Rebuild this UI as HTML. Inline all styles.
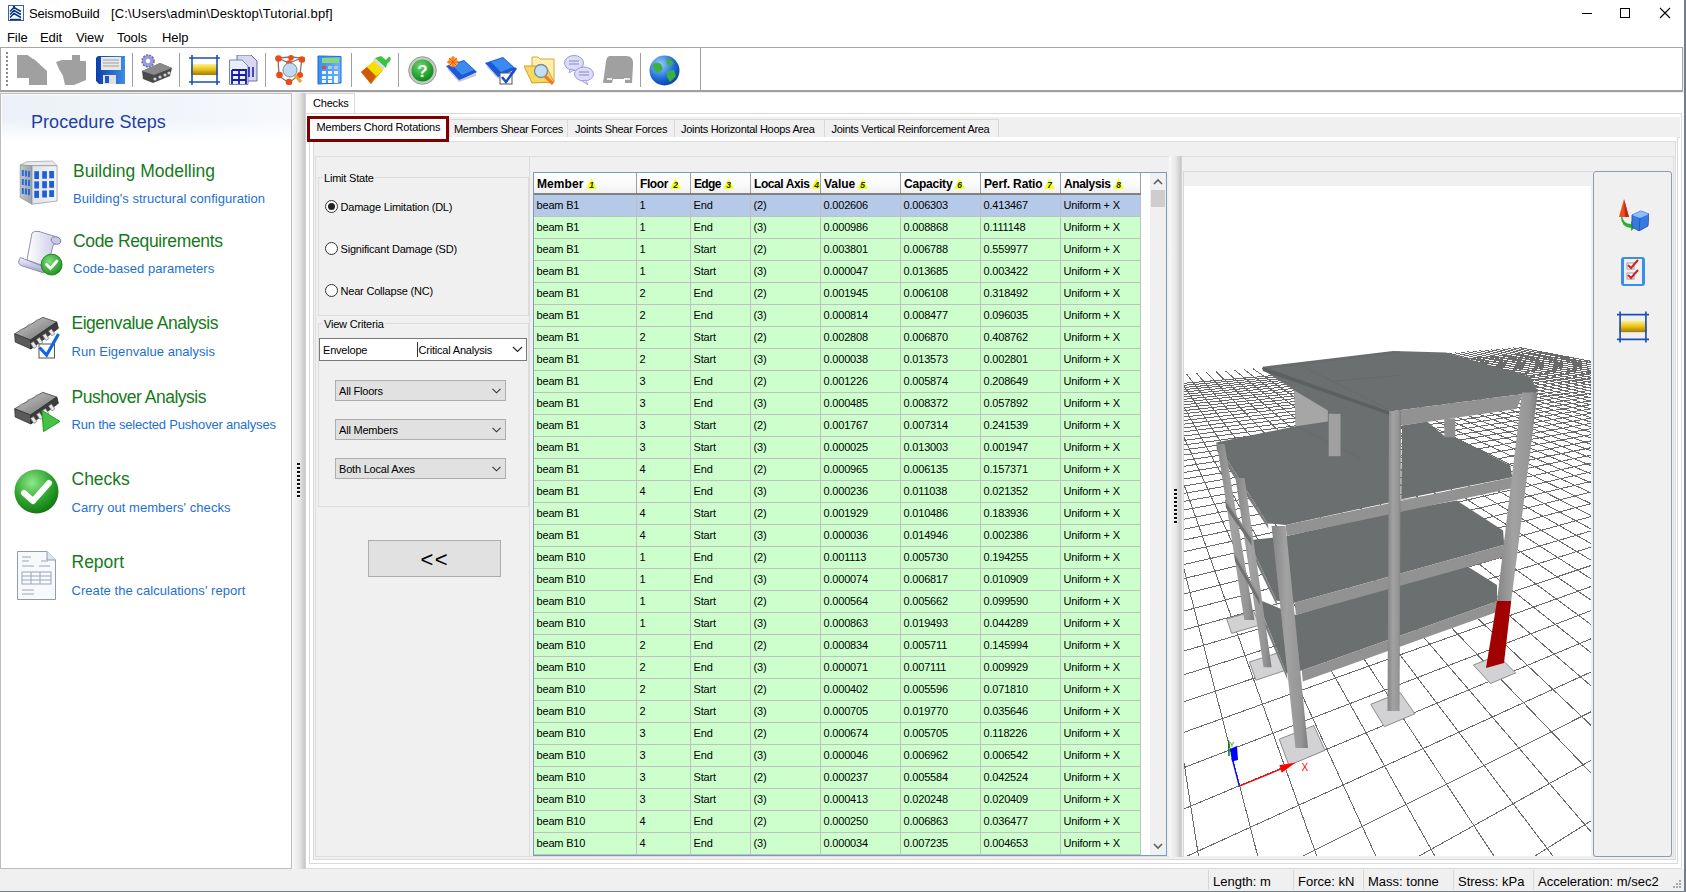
<!DOCTYPE html>
<html><head><meta charset="utf-8"><title>SeismoBuild</title>
<style>
*{box-sizing:border-box;margin:0;padding:0}
html,body{width:1686px;height:892px;overflow:hidden}
body{position:relative;background:#f0f0f0;font-family:"Liberation Sans",sans-serif;color:#000}
.a{position:absolute}
.t{position:absolute;white-space:pre;line-height:1}
/* title/menu */
#top{left:0;top:0;width:1684px;height:47px;background:#fff}
.menu{font-size:13px;top:31px;letter-spacing:-0.1px}
/* toolbar */
#tb{left:0;top:47px;width:1683px;height:45px;background:#fff;border:1px solid #a7a7a7;border-bottom:2px solid #a0a0a0}
.sep{position:absolute;top:6px;width:1px;height:34px;background:#a0a0a0}
.ico{position:absolute;top:7px;width:32px;height:32px}
/* left panel */
#lp{left:0;top:93px;width:292px;height:776px;background:#fff;border:1px solid #bcbcbc}
#lph{left:1px;top:1px;width:289px;height:46px;background:linear-gradient(180deg,rgba(255,255,255,0) 0%,rgba(255,255,255,0) 55%,#fff 100%),linear-gradient(90deg,#ecf1f9 0%,#f1f5fb 60%,#f7f9fc 100%)}
.st{font-size:17.5px;color:#167a1b;letter-spacing:0px}
.ss{font-size:13px;color:#1e6fd3;letter-spacing:0.05px}
/* splitter */
.spl{background:linear-gradient(90deg,#f9f9f9 0%,#e6e6e6 55%,#c6c6c6 92%,#dcdcdc 100%)}
/* main */
#main{left:306px;top:93px;width:1378px;height:776px;background:#fff}
.tab{position:absolute;top:119px;height:19px;background:#f0f0f0;border:1px solid #d9d9d9;border-bottom:none;font-size:11px;letter-spacing:-0.3px}
.tab span{position:absolute;left:4px;top:3px;white-space:pre}
.ctl{font-size:11px;letter-spacing:-0.2px}
.combo{position:absolute;background:#e1e1e1;border:1px solid #adadad;height:21px;font-size:11px;letter-spacing:-0.2px}
.combo span{position:absolute;left:3px;top:4px;white-space:pre}
.chev{position:absolute;right:4px;top:7px;width:9px;height:6px}
.radio{position:absolute;width:13px;height:13px;border-radius:50%;border:1px solid #333;background:#fff}
.radio.on::after{content:"";position:absolute;left:2px;top:2px;width:7px;height:7px;border-radius:50%;background:#222}
/* table */
#tbl{left:533px;top:172px;width:634px;height:684px;background:#fff;border:1px solid #7a9ac0}
.thead{position:absolute;left:0;top:0;width:607px;height:22px;background:linear-gradient(180deg,#fff 0%,#fafafa 60%,#f0f0f0 100%);border-bottom:2px solid #808080}
.th{position:absolute;top:0;height:20px;border-right:1px solid #a0a0a0;font-size:12px;font-weight:bold;padding-left:3px;white-space:nowrap;overflow:hidden}
.th span{position:absolute;left:3px;top:4px;letter-spacing:0.1px}
.tri{position:relative;display:inline-block;width:11px;height:11px;margin-left:2px;top:1px;letter-spacing:0}
.tr{position:absolute;left:0;width:607px;height:22px;background:#ccffcc;border-bottom:1px solid #c0c0c0}
.tr.sel{background:#b5c9e9}
.td{position:absolute;top:0;height:21px;border-right:1px solid #c0c0c0;font-size:11px;letter-spacing:-0.2px;padding:4px 0 0 2.6px;white-space:pre;overflow:hidden}
/* status */
.sb{font-size:13px;top:875px}
.sbsep{position:absolute;top:870px;width:1px;height:20px;background:#d6d6d6}
</style></head><body>
<!-- top -->
<div id="top" class="a"></div>
<svg class="a" style="left:8px;top:5px" width="16" height="16" viewBox="0 0 16 16">
 <rect x="0.5" y="0.5" width="15" height="15" fill="#fff" stroke="#3d6394" stroke-width="1"/>
 <path d="M2 6.5L6 2.5L13 6.5M2 9.5L6 5.5L13 9.5M2 12.5L6 8.5L13 12.5M2 14.5L13 14.5" stroke="#08397f" stroke-width="1.6" fill="none"/>
 <rect x="5" y="1" width="2" height="2" fill="#08397f"/>
</svg>
<div class="t" style="left:29px;top:7px;font-size:13px;letter-spacing:-0.15px">SeismoBuild</div>
<div class="t" style="left:111px;top:7px;font-size:13px;letter-spacing:0.15px">[C:\Users\admin\Desktop\Tutorial.bpf]</div>
<div class="a" style="left:1582px;top:13px;width:10px;height:1px;background:#000"></div>
<div class="a" style="left:1620px;top:8px;width:10px;height:10px;border:1px solid #000"></div>
<svg class="a" style="left:1659px;top:7px" width="12" height="12"><path d="M1 1L11 11M11 1L1 11" stroke="#000" stroke-width="1.1"/></svg>
<div class="t menu" style="left:7px">File</div>
<div class="t menu" style="left:40px">Edit</div>
<div class="t menu" style="left:76px">View</div>
<div class="t menu" style="left:117px">Tools</div>
<div class="t menu" style="left:162px">Help</div>
<div class="a" style="left:1684px;top:0;width:2px;height:892px;background:#6f7e8a"></div>

<!-- toolbar -->
<div id="tb" class="a"></div>
<div class="a" style="left:6px;top:52px;width:2px;height:34px;background:repeating-linear-gradient(180deg,#8a8a8a 0 2px,transparent 2px 4px)"></div>
<div class="sep" style="left:132px;top:53px"></div>
<div class="sep" style="left:179px;top:53px"></div>
<div class="sep" style="left:265px;top:53px"></div>
<div class="sep" style="left:351px;top:53px"></div>
<div class="sep" style="left:398px;top:53px"></div>
<div class="sep" style="left:640px;top:53px"></div>
<div class="a" style="left:700px;top:48px;width:1px;height:42px;background:#a0a0a0"></div>
<!-- gray new -->
<svg class="a" style="left:17px;top:55px" width="31" height="31" viewBox="0 0 31 31"><path d="M0 0H10.5L16 4H17L30 16V30H12V23H0Z" fill="#a0a0a0"/></svg>
<svg class="a" style="left:56px;top:55px" width="31" height="31" viewBox="0 0 31 31"><path d="M16 0H24V6H30V25L18 30H9L7 21L3 14L0 7L6 5H16Z" fill="#a0a0a0"/></svg>
<!-- floppy -->
<svg class="a" style="left:96px;top:56px" width="30" height="29" viewBox="0 0 30 29">
 <defs><linearGradient id="flp" x1="0" x2="1"><stop offset="0" stop-color="#0c3fa8"/><stop offset="1" stop-color="#3c8ee8"/></linearGradient></defs>
 <path d="M2 0H29V28H3L0 25V2Z" fill="url(#flp)"/>
 <rect x="5" y="1" width="20" height="13" fill="#e8e8e8"/><path d="M7 4H23M7 7H23M7 10H23" stroke="#b8b8b8" stroke-width="1.4"/>
 <rect x="7" y="19" width="13" height="9" fill="#e0e0e0"/><rect x="9" y="20" width="4" height="7" fill="#1e58c8"/>
</svg>
<!-- gear chip -->
<svg class="a" style="left:140px;top:54px" width="33" height="29" viewBox="0 0 33 29">
 <path d="M2 17 L20 9 L32 14 L30 22 L13 29 L3 25 Z" fill="#4a4a4a"/>
 <path d="M2 17 L20 9 L32 14 L14 21 Z" fill="#8a8a8a"/>
 <g fill="#d0d0d0"><circle cx="15" cy="25" r="1.6"/><circle cx="20" cy="23" r="1.6"/><circle cx="25" cy="21" r="1.6"/><circle cx="29" cy="19" r="1.6"/></g>
 <circle cx="8" cy="7" r="6" fill="#9a9adc" stroke="#6a6ab8" stroke-width="1.5" stroke-dasharray="2 1.2"/>
 <circle cx="8" cy="7" r="2.2" fill="#fff"/>
</svg>
<!-- frame -->
<svg class="a" style="left:189px;top:55px" width="31" height="30" viewBox="0 0 31 30">
 <defs><linearGradient id="gold" x1="0" y1="0" x2="0" y2="1"><stop offset="0" stop-color="#fff28a"/><stop offset="0.5" stop-color="#e8c21a"/><stop offset="1" stop-color="#a47a00"/></linearGradient></defs>
 <rect x="2" y="9" width="27" height="11" fill="url(#gold)"/>
 <path d="M0 3H31M0 27H31M3 0V30M28 0V30" stroke="#1a4fb8" stroke-width="1.6"/>
</svg>
<!-- docs -->
<svg class="a" style="left:229px;top:55px" width="29" height="30" viewBox="0 0 29 30">
 <path d="M8 0H22L28 6V26H8Z" fill="#d7d7ef" stroke="#6a6ab0" stroke-width="1"/>
 <path d="M0.5 5H13L19 11V29.5H0.5Z" fill="#e8eef8" stroke="#6a8ab0" stroke-width="1"/>
 <path d="M3 15H17V29M3 15V29M3 20H17M3 25H17M10 15V29" stroke="#1a1aa8" stroke-width="1.8" fill="none"/>
 <path d="M20 12V22M24 12V22" stroke="#1a1aa8" stroke-width="1.5"/>
</svg>
<!-- molecule -->
<svg class="a" style="left:275px;top:55px" width="30" height="30" viewBox="0 0 30 30">
 <path d="M3 3L16 2L27 3L25 19L14 28L4 21Z M16 2L14 8M3 3L14 8L27 3" stroke="#777" stroke-width="1.3" fill="none"/>
 <g fill="#ee4a16"><circle cx="3.5" cy="3.5" r="3.3"/><circle cx="16" cy="2.8" r="2.8"/><circle cx="27" cy="4.5" r="3.3"/><circle cx="14" cy="8" r="2.8"/><circle cx="4.5" cy="20" r="3.3"/><circle cx="25" cy="20" r="3"/><circle cx="14" cy="27" r="3.3"/></g>
 <circle cx="15" cy="15" r="7" fill="#bcdcf4" stroke="#888" stroke-width="1"/>
 <path d="M20 20L26 27" stroke="#f0a030" stroke-width="3"/>
</svg>
<!-- calculator -->
<svg class="a" style="left:317px;top:55px" width="25" height="30" viewBox="0 0 25 30">
 <defs><linearGradient id="calc" x1="0" x2="1"><stop offset="0" stop-color="#3a8ef0"/><stop offset="1" stop-color="#6ab4ff"/></linearGradient></defs>
 <path d="M1 1L24 1.5V28L1 29Z" fill="url(#calc)" stroke="#1a6ad8" stroke-width="1"/>
 <rect x="5" y="3" width="17" height="5" fill="#8ad87a"/>
 <rect x="5" y="11" width="4" height="3" fill="#e04a30"/><rect x="11" y="11" width="4" height="3" fill="#c8c0c8"/><rect x="17" y="11" width="4" height="3" fill="#c8c0c8"/>
 <g fill="#f2f6fb"><rect x="5" y="16" width="4" height="3"/><rect x="11" y="16" width="4" height="3"/><rect x="17" y="16" width="4" height="3"/><rect x="5" y="21" width="4" height="3"/><rect x="11" y="21" width="4" height="3"/><rect x="17" y="21" width="4" height="7"/><rect x="5" y="25" width="4" height="3"/><rect x="11" y="25" width="4" height="3"/></g>
</svg>
<!-- brush -->
<svg class="a" style="left:361px;top:55px" width="31" height="30" viewBox="0 0 31 30">
 <path d="M0 17L13 6L22 15L10 29Z" fill="#e8a400"/>
 <path d="M0 17L6 12L15 21L10 29Z" fill="#d0580a"/>
 <path d="M6 12L13 6L22 15L15 21Z" fill="#f5e000"/>
 <path d="M12 5L14 3L24 13L22 15Z" fill="#d8d8d8"/>
 <path d="M14 3L20 1L25 5L28 1.5Q31 3 29 6L26 9L25 13Z" fill="#3ec23e"/>
</svg>
<!-- help -->
<svg class="a" style="left:408px;top:56px" width="29" height="29" viewBox="0 0 29 29">
 <defs><radialGradient id="hlp" cx="0.4" cy="0.3" r="0.7"><stop offset="0" stop-color="#6ad86a"/><stop offset="1" stop-color="#0a8a1a"/></radialGradient></defs>
 <circle cx="14.5" cy="14.5" r="13.8" fill="#c8c8c8" stroke="#999" stroke-width="1"/>
 <circle cx="14.5" cy="14.5" r="11" fill="url(#hlp)"/>
 <text x="14.5" y="21" font-size="17" font-weight="bold" fill="#fff" text-anchor="middle" font-family="Liberation Sans">?</text>
</svg>
<!-- book1 -->
<svg class="a" style="left:446px;top:56px" width="32" height="27" viewBox="0 0 32 27">
 <path d="M0 10L18 4L31 16L13 25Z" fill="#1a5ad8"/>
 <path d="M2 12L13 24L30 17L30 20L13 26L2 14Z" fill="#c8c8d8"/>
 <path d="M6 9L18 5L28 14L16 19Z" fill="#3a8af0"/>
 <circle cx="7" cy="6" r="5" fill="#ffb020"/><circle cx="7" cy="6" r="2.5" fill="#ffe050"/>
 <path d="M1 6H13M7 0V12M3 2L11 10M11 2L3 10" stroke="#ff4020" stroke-width="1"/>
</svg>
<!-- book2 -->
<svg class="a" style="left:485px;top:57px" width="32" height="28" viewBox="0 0 32 28">
 <path d="M0 6L18 0L31 12L13 21Z" fill="#1a5ad8"/>
 <path d="M2 8L13 20L30 13L30 16L13 22L2 10Z" fill="#c8c8d8"/>
 <path d="M6 5L18 1L28 10L16 15Z" fill="#3a8af0"/>
 <rect x="15" y="16" width="12" height="11" fill="#fff" stroke="#555" stroke-width="1"/>
 <path d="M17 20L21 25L31 11" stroke="#1a4ad0" stroke-width="2.5" fill="none"/>
</svg>
<!-- folder -->
<svg class="a" style="left:524px;top:56px" width="31" height="29" viewBox="0 0 31 29">
 <path d="M8 1H14L16 3H30V26H8Z" fill="#fff0b0" stroke="#d8a830" stroke-width="1"/>
 <path d="M0 10L22 10L30 26L8 27Z" fill="#f8d860" stroke="#d0a020" stroke-width="1"/>
 <circle cx="17" cy="15" r="6.5" fill="#bfe0f8" stroke="#7a8a9a" stroke-width="1.3"/>
 <path d="M21 20L29 28" stroke="#f07a30" stroke-width="3.2"/>
</svg>
<!-- chat -->
<svg class="a" style="left:564px;top:55px" width="31" height="30" viewBox="0 0 31 30">
 <ellipse cx="10" cy="8" rx="9.5" ry="7.5" fill="#dcdcf8" stroke="#9a9ad8" stroke-width="1"/>
 <path d="M6 14L5 18L10 15Z" fill="#dcdcf8" stroke="#9a9ad8" stroke-width="0.8"/>
 <ellipse cx="20" cy="19" rx="9.5" ry="7" fill="#dcdcf8" stroke="#9a9ad8" stroke-width="1"/>
 <path d="M22 25L24 30L18 26Z" fill="#dcdcf8" stroke="#9a9ad8" stroke-width="0.8"/>
 <path d="M5 6H15M5 9H15M15 17H25M15 20H25" stroke="#8a8ab8" stroke-width="1"/>
</svg>
<!-- gray -->
<svg class="a" style="left:603px;top:55px" width="31" height="30" viewBox="0 0 31 30"><path d="M7 1H23Q31 1 30 10L29 28H22V24H10L9 28H0L2 14L3 6Q4 1 7 1Z" fill="#a0a0a0"/><path d="M4 24H9M21 24H27" stroke="#fff" stroke-width="1.5"/></svg>
<!-- globe -->
<svg class="a" style="left:649px;top:55px" width="31" height="31" viewBox="0 0 31 31">
 <defs><radialGradient id="glb" cx="0.35" cy="0.3" r="0.8"><stop offset="0" stop-color="#9ad0ff"/><stop offset="0.6" stop-color="#1a6ad8"/><stop offset="1" stop-color="#0a3a98"/></radialGradient></defs>
 <circle cx="15.5" cy="15.5" r="15" fill="url(#glb)"/>
 <path d="M3 10Q8 6 12 9L14 14L9 18L6 16Z M17 4Q22 4 25 8L22 11L18 9Z M18 16L25 15L27 21L21 27L18 22Z" fill="#3ab040"/>
</svg>


<!-- left panel -->
<div id="lp" class="a"><div id="lph" class="a"></div></div>
<div class="t" style="left:31px;top:113px;font-size:18px;color:#1f3ea5;letter-spacing:0.05px">Procedure Steps</div>
<!-- Building Modelling -->
<svg class="a" style="left:18px;top:158px" width="44" height="48" viewBox="0 0 44 48">
 <defs>
  <linearGradient id="bgf" x1="0" x2="1"><stop offset="0" stop-color="#dfe2e6"/><stop offset="1" stop-color="#f2f3f5"/></linearGradient>
  <linearGradient id="bgs" x1="0" x2="1"><stop offset="0" stop-color="#c2c6cc"/><stop offset="1" stop-color="#9aa0a8"/></linearGradient>
 </defs>
 <path d="M2.2 7 L8.5 3.8 L34.4 3 L39.1 7.7 L14 7.7 Z" fill="#e8eaec" stroke="#9a9fa6" stroke-width="0.7"/>
 <path d="M2.2 7 L14 7.7 L14 46.2 L2.2 39.5 Z" fill="url(#bgs)" stroke="#8b929b" stroke-width="0.7"/>
 <path d="M14 7.7 L39.1 7.7 L39.1 43 L14 46.2 Z" fill="url(#bgf)" stroke="#8b929b" stroke-width="0.7"/>
 <g fill="#1f5fd6">
  <rect x="16.3" y="13.2" width="4.7" height="7.8"/><rect x="24.2" y="13.2" width="4.7" height="7.5"/><rect x="31.2" y="13" width="4.8" height="7.3"/>
  <rect x="16.3" y="23.4" width="4.7" height="7.1"/><rect x="24.2" y="23.2" width="4.7" height="7"/><rect x="31.2" y="23" width="4.8" height="6.8"/>
  <rect x="16.3" y="32.8" width="4.7" height="7.1"/><rect x="24.2" y="32.5" width="4.7" height="7"/><rect x="31.2" y="32.2" width="4.8" height="6.8"/>
 </g>
 <g fill="#2a6ad8">
  <rect x="3.8" y="12" width="2" height="6"/><rect x="6.9" y="12.5" width="2.1" height="6"/><rect x="10" y="13" width="2" height="6"/>
  <rect x="3.8" y="21" width="2" height="6"/><rect x="6.9" y="21.5" width="2.1" height="6"/><rect x="10" y="22" width="2" height="6"/>
  <rect x="3.8" y="30" width="2" height="6"/><rect x="6.9" y="30.5" width="2.1" height="6"/><rect x="10" y="31" width="2" height="6"/>
 </g>
</svg>
<div class="t st" style="left:73px;top:162.5px">Building Modelling</div>
<div class="t ss" style="left:73px;top:192px">Building's structural configuration</div>

<!-- Code Requirements -->
<svg class="a" style="left:16px;top:229px" width="48" height="48" viewBox="0 0 48 48">
 <defs><linearGradient id="scr" x1="0" x2="1"><stop offset="0" stop-color="#ffffff"/><stop offset="1" stop-color="#c4c4e4"/></linearGradient>
 <linearGradient id="roll" x1="0" y1="0" x2="0" y2="1"><stop offset="0" stop-color="#f4f4fc"/><stop offset="1" stop-color="#9c9cc8"/></linearGradient>
 <radialGradient id="gck" cx="0.4" cy="0.35" r="0.7"><stop offset="0" stop-color="#7fe07a"/><stop offset="1" stop-color="#1a8f1a"/></radialGradient></defs>
 <path d="M16 4 Q18 1.5 23 2.5 L41 8 Q46 10 44 14 L37.5 15.5 L31 38 L11 31 Z" fill="url(#scr)" stroke="#8585ad" stroke-width="0.9"/>
 <ellipse cx="40" cy="11.5" rx="5" ry="3.6" transform="rotate(20 40 11.5)" fill="#c8c8e6" stroke="#8585ad" stroke-width="0.9"/>
 <path d="M4.5 28.5 L27 37.5 Q30.5 40 28 44 L5 36.5 Q0.5 34 4.5 28.5Z" fill="url(#roll)" stroke="#8585ad" stroke-width="0.9"/>
 <circle cx="35.6" cy="35.6" r="10.5" fill="url(#gck)" stroke="#157015" stroke-width="0.8"/>
 <path d="M30.5 35.5 L34.5 39.5 L41 32" stroke="#fff" stroke-width="2.8" fill="none" stroke-linecap="round"/>
</svg>
<div class="t st" style="left:73px;top:232.5px;letter-spacing:-0.36px">Code Requirements</div>
<div class="t ss" style="left:73px;top:262px">Code-based parameters</div>

<!-- Eigenvalue -->
<svg class="a" style="left:12px;top:312px" width="50" height="48" viewBox="0 0 50 48">
 <defs><linearGradient id="chipt" x1="0" y1="0" x2="1" y2="1"><stop offset="0" stop-color="#d0d0d0"/><stop offset="1" stop-color="#6a6a6a"/></linearGradient></defs>
 <path d="M2.7 21.8L30.7 5.3L44.8 10L18.5 28Z" fill="url(#chipt)" stroke="#444" stroke-width="0.8"/>
 <path d="M2.7 21.8L18.5 28L18.9 37L3.2 30Z" fill="#5a5a5a" stroke="#333" stroke-width="0.8"/>
 <path d="M18.5 28L44.8 10L46.4 16.3L18.9 37Z" fill="#3c3c3c" stroke="#2a2a2a" stroke-width="0.8"/>
 <g fill="#e8e8e8" stroke="#777" stroke-width="0.6"><rect x="20" y="30" width="3.5" height="6" transform="rotate(-35 21.7 33)"/><rect x="26" y="26" width="3.5" height="6" transform="rotate(-35 27.7 29)"/><rect x="32" y="22" width="3.5" height="6" transform="rotate(-35 33.7 25)"/><rect x="38" y="17.5" width="3.5" height="6" transform="rotate(-35 39.7 20.5)"/></g>
 <g fill="#9a9a9a"><rect x="7" y="17" width="4" height="2" transform="rotate(-30 9 18)"/><rect x="15" y="12" width="4" height="2" transform="rotate(-30 17 13)"/><rect x="23" y="7.5" width="4" height="2" transform="rotate(-30 25 8.5)"/></g>
 <rect x="27" y="32" width="15.5" height="14" fill="#fff" stroke="#555" stroke-width="1"/>
 <path d="M27.5 35.5L34.6 43L46.5 22" stroke="#1565e0" stroke-width="3.2" fill="none"/>
</svg>
<div class="t st" style="left:71.5px;top:315px;letter-spacing:-0.48px">Eigenvalue Analysis</div>
<div class="t ss" style="left:71.5px;top:344.5px">Run Eigenvalue analysis</div>

<!-- Pushover -->
<svg class="a" style="left:12px;top:386.5px" width="50" height="48" viewBox="0 0 50 48">
 <path d="M2.7 21.8L30.7 5.3L44.8 10L18.5 28Z" fill="url(#chipt)" stroke="#444" stroke-width="0.8"/>
 <path d="M2.7 21.8L18.5 28L18.9 37L3.2 30Z" fill="#5a5a5a" stroke="#333" stroke-width="0.8"/>
 <path d="M18.5 28L44.8 10L46.4 16.3L18.9 37Z" fill="#3c3c3c" stroke="#2a2a2a" stroke-width="0.8"/>
 <g fill="#e8e8e8" stroke="#777" stroke-width="0.6"><rect x="20" y="30" width="3.5" height="6" transform="rotate(-35 21.7 33)"/><rect x="26" y="26" width="3.5" height="6" transform="rotate(-35 27.7 29)"/><rect x="32" y="22" width="3.5" height="6" transform="rotate(-35 33.7 25)"/><rect x="38" y="17.5" width="3.5" height="6" transform="rotate(-35 39.7 20.5)"/></g>
 <g fill="#9a9a9a"><rect x="7" y="17" width="4" height="2" transform="rotate(-30 9 18)"/><rect x="15" y="12" width="4" height="2" transform="rotate(-30 17 13)"/><rect x="23" y="7.5" width="4" height="2" transform="rotate(-30 25 8.5)"/></g>
 <path d="M29.9 23.4L31.5 44.6L48 34.4Z" fill="#46c046" stroke="#239a23" stroke-width="1"/>
</svg>
<div class="t st" style="left:71.5px;top:388.5px;letter-spacing:-0.5px">Pushover Analysis</div>
<div class="t ss" style="left:71.5px;top:418px;letter-spacing:-0.2px">Run the selected Pushover analyses</div>

<!-- Checks -->
<svg class="a" style="left:14px;top:469px" width="46" height="46" viewBox="0 0 46 46">
 <defs><radialGradient id="gck2" cx="0.4" cy="0.3" r="0.75"><stop offset="0" stop-color="#8fe88a"/><stop offset="0.6" stop-color="#2aa22a"/><stop offset="1" stop-color="#117011"/></radialGradient></defs>
 <circle cx="22.5" cy="22.5" r="22" fill="url(#gck2)"/>
 <path d="M10 24 L19 32 L35 14" stroke="#fff" stroke-width="6" fill="none" stroke-linecap="round" stroke-linejoin="round"/>
</svg>
<div class="t st" style="left:71.5px;top:471px">Checks</div>
<div class="t ss" style="left:71.5px;top:501px">Carry out members' checks</div>

<!-- Report -->
<svg class="a" style="left:17px;top:551px" width="40" height="49" viewBox="0 0 40 49">
 <path d="M0.5 0.5 L30 0.5 L38.5 9 L38.5 48.5 L0.5 48.5 Z" fill="#f7f9fc" stroke="#8e9bb0" stroke-width="1"/>
 <path d="M30 0.5 L30 9 L38.5 9" fill="#dfe6ef" stroke="#8e9bb0" stroke-width="1"/>
 <g stroke="#9aa6b8" stroke-width="1">
  <path d="M5 6H14M5 10H12M24 10H31M5 15H17M22 15H33"/>
  <rect x="5" y="21" width="29" height="12" fill="none"/>
  <path d="M5 25H34M5 29H34M14 21V33M23 21V33M5 39H17M5 43H17"/>
 </g>
</svg>
<div class="t st" style="left:71.5px;top:553.5px">Report</div>
<div class="t ss" style="left:71.5px;top:583.5px">Create the calculations' report</div>



<!-- splitters -->
<div class="a spl" style="left:292px;top:93px;width:14px;height:776px"></div>
<!-- splitter grip -->
<div class="a" style="left:297px;top:463px;width:3px;height:36px;background:repeating-linear-gradient(180deg,#111 0 2px,#fff 2px 3px,transparent 3px 4px)"></div>

<!-- main -->
<div id="main" class="a"></div>
<!-- checks tab header -->
<div class="a" style="left:306px;top:93px;width:49px;height:21px;background:#fff;border-right:1px solid #d9d9d9;border-top:1px solid #d9d9d9"></div>
<div class="t" style="left:313px;top:97.5px;font-size:11px;letter-spacing:-0.2px">Checks</div>
<!-- F1 -->
<div class="a" style="left:306px;top:113px;width:1376px;height:756px;background:#fff;border-top:1px solid #d9d9d9;border-right:1px solid #d9d9d9;border-bottom:1px solid #d9d9d9"></div>
<div class="a" style="left:354px;top:93px;width:1px;height:21px;background:#d9d9d9"></div>
<!-- tab strip -->
<div class="a" style="left:307px;top:117px;width:1373px;height:21px;background:#f0f0f0;border-bottom:1px solid #dadada"></div>
<div class="tab" style="left:449px;width:119px"><span style="left:4px">Members Shear Forces</span></div>
<div class="tab" style="left:567px;width:108px"><span style="left:7px">Joints Shear Forces</span></div>
<div class="tab" style="left:674px;width:151px"><span style="left:6px">Joints Horizontal Hoops Area</span></div>
<div class="tab" style="left:824px;width:175px"><span style="left:6.5px">Joints Vertical Reinforcement Area</span></div>
<!-- F3/F4/F5 -->
<div class="a" style="left:309px;top:137px;width:1369px;height:727px;background:#fff;border:1px solid #dadada;border-top:none"></div>
<div class="a" style="left:313px;top:141px;width:1363px;height:719px;background:#f0f0f0;border:1px solid #dadada"></div>
<div class="a" style="left:315px;top:156px;width:1359px;height:701px;background:#f0f0f0;border:1px solid #dedede"></div>
<!-- selected tab -->
<div class="a" style="left:307px;top:116px;width:142px;height:26px;background:#fff;border:3px solid #800000"></div>
<div class="t" style="left:316.5px;top:122px;font-size:11px;letter-spacing:-0.2px">Members Chord Rotations</div>
<!-- control panel -->
<div class="a" style="left:529px;top:156px;width:1px;height:701px;background:#dcdcdc"></div>
<div class="a" style="left:318px;top:177px;width:211px;height:139px;border:1px solid #dcdcdc"></div>
<div class="t ctl" style="left:323px;top:172.5px;background:#f0f0f0;padding:0 1px">Limit State</div>
<div class="radio on" style="left:325px;top:200px"></div>
<div class="t ctl" style="left:340.5px;top:201.5px">Damage Limitation (DL)</div>
<div class="radio" style="left:325px;top:242px"></div>
<div class="t ctl" style="left:340.5px;top:243.5px">Significant Damage (SD)</div>
<div class="radio" style="left:325px;top:284px"></div>
<div class="t ctl" style="left:340.5px;top:285.5px">Near Collapse (NC)</div>

<div class="a" style="left:318px;top:323px;width:211px;height:184px;border:1px solid #dcdcdc"></div>
<div class="t ctl" style="left:323px;top:318.5px;background:#f0f0f0;padding:0 1px">View Criteria</div>
<div class="a" style="left:319px;top:338px;width:208px;height:23px;background:#fff;border:1px solid #7a7a7a"></div>
<div class="a" style="left:417px;top:342px;width:1px;height:15px;background:#333"></div>
<div class="t ctl" style="left:323px;top:344.5px">Envelope</div>
<div class="t ctl" style="left:418.5px;top:344.5px">Critical Analysis</div>
<svg class="a" style="left:512px;top:346px" width="11" height="7"><path d="M1 1L5.5 5.5L10 1" stroke="#222" stroke-width="1.1" fill="none"/></svg>

<div class="combo" style="left:335px;top:380px;width:171px"><span>All Floors</span><svg class="chev" viewBox="0 0 9 6"><path d="M0.5 0.8L4.5 4.8L8.5 0.8" stroke="#333" stroke-width="1.1" fill="none"/></svg></div>
<div class="combo" style="left:335px;top:419px;width:171px"><span>All Members</span><svg class="chev" viewBox="0 0 9 6"><path d="M0.5 0.8L4.5 4.8L8.5 0.8" stroke="#333" stroke-width="1.1" fill="none"/></svg></div>
<div class="combo" style="left:335px;top:458px;width:171px"><span>Both Local Axes</span><svg class="chev" viewBox="0 0 9 6"><path d="M0.5 0.8L4.5 4.8L8.5 0.8" stroke="#333" stroke-width="1.1" fill="none"/></svg></div>

<div class="a" style="left:368px;top:540px;width:133px;height:37px;background:#e1e1e1;border:1px solid #adadad"></div>
<div class="t" style="left:420.5px;top:549px;font-size:22px;letter-spacing:1.4px">&lt;&lt;</div>

<!-- table -->
<div id="tbl" class="a">
<div class="thead">
<div class="th" style="left:0px;width:103px"><span style="letter-spacing:0.08px">Member<i class="tri"><svg width="11" height="11" viewBox="0 0 11 11"><path d="M5.5 0.5L10.8 10.8H0.2Z" fill="#ffff00"/><text x="5.5" y="10" font-size="8.5" font-weight="bold" text-anchor="middle" fill="#0c3a0c" font-family="Liberation Sans">1</text></svg></i></span></div>
<div class="th" style="left:103px;width:54px"><span style="letter-spacing:-0.4px">Floor<i class="tri"><svg width="11" height="11" viewBox="0 0 11 11"><path d="M5.5 0.5L10.8 10.8H0.2Z" fill="#ffff00"/><text x="5.5" y="10" font-size="8.5" font-weight="bold" text-anchor="middle" fill="#0c3a0c" font-family="Liberation Sans">2</text></svg></i></span></div>
<div class="th" style="left:157px;width:60px"><span style="letter-spacing:-0.65px">Edge<i class="tri"><svg width="11" height="11" viewBox="0 0 11 11"><path d="M5.5 0.5L10.8 10.8H0.2Z" fill="#ffff00"/><text x="5.5" y="10" font-size="8.5" font-weight="bold" text-anchor="middle" fill="#0c3a0c" font-family="Liberation Sans">3</text></svg></i></span></div>
<div class="th" style="left:217px;width:70px"><span style="letter-spacing:-0.41px">Local Axis<i class="tri"><svg width="11" height="11" viewBox="0 0 11 11"><path d="M5.5 0.5L10.8 10.8H0.2Z" fill="#ffff00"/><text x="5.5" y="10" font-size="8.5" font-weight="bold" text-anchor="middle" fill="#0c3a0c" font-family="Liberation Sans">4</text></svg></i></span></div>
<div class="th" style="left:287px;width:80px"><span style="letter-spacing:-0.06px">Value<i class="tri"><svg width="11" height="11" viewBox="0 0 11 11"><path d="M5.5 0.5L10.8 10.8H0.2Z" fill="#ffff00"/><text x="5.5" y="10" font-size="8.5" font-weight="bold" text-anchor="middle" fill="#0c3a0c" font-family="Liberation Sans">5</text></svg></i></span></div>
<div class="th" style="left:367px;width:80px"><span style="letter-spacing:-0.21px">Capacity<i class="tri"><svg width="11" height="11" viewBox="0 0 11 11"><path d="M5.5 0.5L10.8 10.8H0.2Z" fill="#ffff00"/><text x="5.5" y="10" font-size="8.5" font-weight="bold" text-anchor="middle" fill="#0c3a0c" font-family="Liberation Sans">6</text></svg></i></span></div>
<div class="th" style="left:447px;width:80px"><span style="letter-spacing:-0.15px">Perf. Ratio<i class="tri"><svg width="11" height="11" viewBox="0 0 11 11"><path d="M5.5 0.5L10.8 10.8H0.2Z" fill="#ffff00"/><text x="5.5" y="10" font-size="8.5" font-weight="bold" text-anchor="middle" fill="#0c3a0c" font-family="Liberation Sans">7</text></svg></i></span></div>
<div class="th" style="left:527px;width:80px"><span style="letter-spacing:-0.35px">Analysis<i class="tri"><svg width="11" height="11" viewBox="0 0 11 11"><path d="M5.5 0.5L10.8 10.8H0.2Z" fill="#ffff00"/><text x="5.5" y="10" font-size="8.5" font-weight="bold" text-anchor="middle" fill="#0c3a0c" font-family="Liberation Sans">8</text></svg></i></span></div>
</div>
<div class="tr sel" style="top:22px">
<div class="td" style="left:0px;width:103px">beam B1</div>
<div class="td" style="left:103px;width:54px">1</div>
<div class="td" style="left:157px;width:60px">End</div>
<div class="td" style="left:217px;width:70px">(2)</div>
<div class="td" style="left:287px;width:80px">0.002606</div>
<div class="td" style="left:367px;width:80px">0.006303</div>
<div class="td" style="left:447px;width:80px">0.413467</div>
<div class="td" style="left:527px;width:80px">Uniform + X</div>
</div>
<div class="tr" style="top:44px">
<div class="td" style="left:0px;width:103px">beam B1</div>
<div class="td" style="left:103px;width:54px">1</div>
<div class="td" style="left:157px;width:60px">End</div>
<div class="td" style="left:217px;width:70px">(3)</div>
<div class="td" style="left:287px;width:80px">0.000986</div>
<div class="td" style="left:367px;width:80px">0.008868</div>
<div class="td" style="left:447px;width:80px">0.111148</div>
<div class="td" style="left:527px;width:80px">Uniform + X</div>
</div>
<div class="tr" style="top:66px">
<div class="td" style="left:0px;width:103px">beam B1</div>
<div class="td" style="left:103px;width:54px">1</div>
<div class="td" style="left:157px;width:60px">Start</div>
<div class="td" style="left:217px;width:70px">(2)</div>
<div class="td" style="left:287px;width:80px">0.003801</div>
<div class="td" style="left:367px;width:80px">0.006788</div>
<div class="td" style="left:447px;width:80px">0.559977</div>
<div class="td" style="left:527px;width:80px">Uniform + X</div>
</div>
<div class="tr" style="top:88px">
<div class="td" style="left:0px;width:103px">beam B1</div>
<div class="td" style="left:103px;width:54px">1</div>
<div class="td" style="left:157px;width:60px">Start</div>
<div class="td" style="left:217px;width:70px">(3)</div>
<div class="td" style="left:287px;width:80px">0.000047</div>
<div class="td" style="left:367px;width:80px">0.013685</div>
<div class="td" style="left:447px;width:80px">0.003422</div>
<div class="td" style="left:527px;width:80px">Uniform + X</div>
</div>
<div class="tr" style="top:110px">
<div class="td" style="left:0px;width:103px">beam B1</div>
<div class="td" style="left:103px;width:54px">2</div>
<div class="td" style="left:157px;width:60px">End</div>
<div class="td" style="left:217px;width:70px">(2)</div>
<div class="td" style="left:287px;width:80px">0.001945</div>
<div class="td" style="left:367px;width:80px">0.006108</div>
<div class="td" style="left:447px;width:80px">0.318492</div>
<div class="td" style="left:527px;width:80px">Uniform + X</div>
</div>
<div class="tr" style="top:132px">
<div class="td" style="left:0px;width:103px">beam B1</div>
<div class="td" style="left:103px;width:54px">2</div>
<div class="td" style="left:157px;width:60px">End</div>
<div class="td" style="left:217px;width:70px">(3)</div>
<div class="td" style="left:287px;width:80px">0.000814</div>
<div class="td" style="left:367px;width:80px">0.008477</div>
<div class="td" style="left:447px;width:80px">0.096035</div>
<div class="td" style="left:527px;width:80px">Uniform + X</div>
</div>
<div class="tr" style="top:154px">
<div class="td" style="left:0px;width:103px">beam B1</div>
<div class="td" style="left:103px;width:54px">2</div>
<div class="td" style="left:157px;width:60px">Start</div>
<div class="td" style="left:217px;width:70px">(2)</div>
<div class="td" style="left:287px;width:80px">0.002808</div>
<div class="td" style="left:367px;width:80px">0.006870</div>
<div class="td" style="left:447px;width:80px">0.408762</div>
<div class="td" style="left:527px;width:80px">Uniform + X</div>
</div>
<div class="tr" style="top:176px">
<div class="td" style="left:0px;width:103px">beam B1</div>
<div class="td" style="left:103px;width:54px">2</div>
<div class="td" style="left:157px;width:60px">Start</div>
<div class="td" style="left:217px;width:70px">(3)</div>
<div class="td" style="left:287px;width:80px">0.000038</div>
<div class="td" style="left:367px;width:80px">0.013573</div>
<div class="td" style="left:447px;width:80px">0.002801</div>
<div class="td" style="left:527px;width:80px">Uniform + X</div>
</div>
<div class="tr" style="top:198px">
<div class="td" style="left:0px;width:103px">beam B1</div>
<div class="td" style="left:103px;width:54px">3</div>
<div class="td" style="left:157px;width:60px">End</div>
<div class="td" style="left:217px;width:70px">(2)</div>
<div class="td" style="left:287px;width:80px">0.001226</div>
<div class="td" style="left:367px;width:80px">0.005874</div>
<div class="td" style="left:447px;width:80px">0.208649</div>
<div class="td" style="left:527px;width:80px">Uniform + X</div>
</div>
<div class="tr" style="top:220px">
<div class="td" style="left:0px;width:103px">beam B1</div>
<div class="td" style="left:103px;width:54px">3</div>
<div class="td" style="left:157px;width:60px">End</div>
<div class="td" style="left:217px;width:70px">(3)</div>
<div class="td" style="left:287px;width:80px">0.000485</div>
<div class="td" style="left:367px;width:80px">0.008372</div>
<div class="td" style="left:447px;width:80px">0.057892</div>
<div class="td" style="left:527px;width:80px">Uniform + X</div>
</div>
<div class="tr" style="top:242px">
<div class="td" style="left:0px;width:103px">beam B1</div>
<div class="td" style="left:103px;width:54px">3</div>
<div class="td" style="left:157px;width:60px">Start</div>
<div class="td" style="left:217px;width:70px">(2)</div>
<div class="td" style="left:287px;width:80px">0.001767</div>
<div class="td" style="left:367px;width:80px">0.007314</div>
<div class="td" style="left:447px;width:80px">0.241539</div>
<div class="td" style="left:527px;width:80px">Uniform + X</div>
</div>
<div class="tr" style="top:264px">
<div class="td" style="left:0px;width:103px">beam B1</div>
<div class="td" style="left:103px;width:54px">3</div>
<div class="td" style="left:157px;width:60px">Start</div>
<div class="td" style="left:217px;width:70px">(3)</div>
<div class="td" style="left:287px;width:80px">0.000025</div>
<div class="td" style="left:367px;width:80px">0.013003</div>
<div class="td" style="left:447px;width:80px">0.001947</div>
<div class="td" style="left:527px;width:80px">Uniform + X</div>
</div>
<div class="tr" style="top:286px">
<div class="td" style="left:0px;width:103px">beam B1</div>
<div class="td" style="left:103px;width:54px">4</div>
<div class="td" style="left:157px;width:60px">End</div>
<div class="td" style="left:217px;width:70px">(2)</div>
<div class="td" style="left:287px;width:80px">0.000965</div>
<div class="td" style="left:367px;width:80px">0.006135</div>
<div class="td" style="left:447px;width:80px">0.157371</div>
<div class="td" style="left:527px;width:80px">Uniform + X</div>
</div>
<div class="tr" style="top:308px">
<div class="td" style="left:0px;width:103px">beam B1</div>
<div class="td" style="left:103px;width:54px">4</div>
<div class="td" style="left:157px;width:60px">End</div>
<div class="td" style="left:217px;width:70px">(3)</div>
<div class="td" style="left:287px;width:80px">0.000236</div>
<div class="td" style="left:367px;width:80px">0.011038</div>
<div class="td" style="left:447px;width:80px">0.021352</div>
<div class="td" style="left:527px;width:80px">Uniform + X</div>
</div>
<div class="tr" style="top:330px">
<div class="td" style="left:0px;width:103px">beam B1</div>
<div class="td" style="left:103px;width:54px">4</div>
<div class="td" style="left:157px;width:60px">Start</div>
<div class="td" style="left:217px;width:70px">(2)</div>
<div class="td" style="left:287px;width:80px">0.001929</div>
<div class="td" style="left:367px;width:80px">0.010486</div>
<div class="td" style="left:447px;width:80px">0.183936</div>
<div class="td" style="left:527px;width:80px">Uniform + X</div>
</div>
<div class="tr" style="top:352px">
<div class="td" style="left:0px;width:103px">beam B1</div>
<div class="td" style="left:103px;width:54px">4</div>
<div class="td" style="left:157px;width:60px">Start</div>
<div class="td" style="left:217px;width:70px">(3)</div>
<div class="td" style="left:287px;width:80px">0.000036</div>
<div class="td" style="left:367px;width:80px">0.014946</div>
<div class="td" style="left:447px;width:80px">0.002386</div>
<div class="td" style="left:527px;width:80px">Uniform + X</div>
</div>
<div class="tr" style="top:374px">
<div class="td" style="left:0px;width:103px">beam B10</div>
<div class="td" style="left:103px;width:54px">1</div>
<div class="td" style="left:157px;width:60px">End</div>
<div class="td" style="left:217px;width:70px">(2)</div>
<div class="td" style="left:287px;width:80px">0.001113</div>
<div class="td" style="left:367px;width:80px">0.005730</div>
<div class="td" style="left:447px;width:80px">0.194255</div>
<div class="td" style="left:527px;width:80px">Uniform + X</div>
</div>
<div class="tr" style="top:396px">
<div class="td" style="left:0px;width:103px">beam B10</div>
<div class="td" style="left:103px;width:54px">1</div>
<div class="td" style="left:157px;width:60px">End</div>
<div class="td" style="left:217px;width:70px">(3)</div>
<div class="td" style="left:287px;width:80px">0.000074</div>
<div class="td" style="left:367px;width:80px">0.006817</div>
<div class="td" style="left:447px;width:80px">0.010909</div>
<div class="td" style="left:527px;width:80px">Uniform + X</div>
</div>
<div class="tr" style="top:418px">
<div class="td" style="left:0px;width:103px">beam B10</div>
<div class="td" style="left:103px;width:54px">1</div>
<div class="td" style="left:157px;width:60px">Start</div>
<div class="td" style="left:217px;width:70px">(2)</div>
<div class="td" style="left:287px;width:80px">0.000564</div>
<div class="td" style="left:367px;width:80px">0.005662</div>
<div class="td" style="left:447px;width:80px">0.099590</div>
<div class="td" style="left:527px;width:80px">Uniform + X</div>
</div>
<div class="tr" style="top:440px">
<div class="td" style="left:0px;width:103px">beam B10</div>
<div class="td" style="left:103px;width:54px">1</div>
<div class="td" style="left:157px;width:60px">Start</div>
<div class="td" style="left:217px;width:70px">(3)</div>
<div class="td" style="left:287px;width:80px">0.000863</div>
<div class="td" style="left:367px;width:80px">0.019493</div>
<div class="td" style="left:447px;width:80px">0.044289</div>
<div class="td" style="left:527px;width:80px">Uniform + X</div>
</div>
<div class="tr" style="top:462px">
<div class="td" style="left:0px;width:103px">beam B10</div>
<div class="td" style="left:103px;width:54px">2</div>
<div class="td" style="left:157px;width:60px">End</div>
<div class="td" style="left:217px;width:70px">(2)</div>
<div class="td" style="left:287px;width:80px">0.000834</div>
<div class="td" style="left:367px;width:80px">0.005711</div>
<div class="td" style="left:447px;width:80px">0.145994</div>
<div class="td" style="left:527px;width:80px">Uniform + X</div>
</div>
<div class="tr" style="top:484px">
<div class="td" style="left:0px;width:103px">beam B10</div>
<div class="td" style="left:103px;width:54px">2</div>
<div class="td" style="left:157px;width:60px">End</div>
<div class="td" style="left:217px;width:70px">(3)</div>
<div class="td" style="left:287px;width:80px">0.000071</div>
<div class="td" style="left:367px;width:80px">0.007111</div>
<div class="td" style="left:447px;width:80px">0.009929</div>
<div class="td" style="left:527px;width:80px">Uniform + X</div>
</div>
<div class="tr" style="top:506px">
<div class="td" style="left:0px;width:103px">beam B10</div>
<div class="td" style="left:103px;width:54px">2</div>
<div class="td" style="left:157px;width:60px">Start</div>
<div class="td" style="left:217px;width:70px">(2)</div>
<div class="td" style="left:287px;width:80px">0.000402</div>
<div class="td" style="left:367px;width:80px">0.005596</div>
<div class="td" style="left:447px;width:80px">0.071810</div>
<div class="td" style="left:527px;width:80px">Uniform + X</div>
</div>
<div class="tr" style="top:528px">
<div class="td" style="left:0px;width:103px">beam B10</div>
<div class="td" style="left:103px;width:54px">2</div>
<div class="td" style="left:157px;width:60px">Start</div>
<div class="td" style="left:217px;width:70px">(3)</div>
<div class="td" style="left:287px;width:80px">0.000705</div>
<div class="td" style="left:367px;width:80px">0.019770</div>
<div class="td" style="left:447px;width:80px">0.035646</div>
<div class="td" style="left:527px;width:80px">Uniform + X</div>
</div>
<div class="tr" style="top:550px">
<div class="td" style="left:0px;width:103px">beam B10</div>
<div class="td" style="left:103px;width:54px">3</div>
<div class="td" style="left:157px;width:60px">End</div>
<div class="td" style="left:217px;width:70px">(2)</div>
<div class="td" style="left:287px;width:80px">0.000674</div>
<div class="td" style="left:367px;width:80px">0.005705</div>
<div class="td" style="left:447px;width:80px">0.118226</div>
<div class="td" style="left:527px;width:80px">Uniform + X</div>
</div>
<div class="tr" style="top:572px">
<div class="td" style="left:0px;width:103px">beam B10</div>
<div class="td" style="left:103px;width:54px">3</div>
<div class="td" style="left:157px;width:60px">End</div>
<div class="td" style="left:217px;width:70px">(3)</div>
<div class="td" style="left:287px;width:80px">0.000046</div>
<div class="td" style="left:367px;width:80px">0.006962</div>
<div class="td" style="left:447px;width:80px">0.006542</div>
<div class="td" style="left:527px;width:80px">Uniform + X</div>
</div>
<div class="tr" style="top:594px">
<div class="td" style="left:0px;width:103px">beam B10</div>
<div class="td" style="left:103px;width:54px">3</div>
<div class="td" style="left:157px;width:60px">Start</div>
<div class="td" style="left:217px;width:70px">(2)</div>
<div class="td" style="left:287px;width:80px">0.000237</div>
<div class="td" style="left:367px;width:80px">0.005584</div>
<div class="td" style="left:447px;width:80px">0.042524</div>
<div class="td" style="left:527px;width:80px">Uniform + X</div>
</div>
<div class="tr" style="top:616px">
<div class="td" style="left:0px;width:103px">beam B10</div>
<div class="td" style="left:103px;width:54px">3</div>
<div class="td" style="left:157px;width:60px">Start</div>
<div class="td" style="left:217px;width:70px">(3)</div>
<div class="td" style="left:287px;width:80px">0.000413</div>
<div class="td" style="left:367px;width:80px">0.020248</div>
<div class="td" style="left:447px;width:80px">0.020409</div>
<div class="td" style="left:527px;width:80px">Uniform + X</div>
</div>
<div class="tr" style="top:638px">
<div class="td" style="left:0px;width:103px">beam B10</div>
<div class="td" style="left:103px;width:54px">4</div>
<div class="td" style="left:157px;width:60px">End</div>
<div class="td" style="left:217px;width:70px">(2)</div>
<div class="td" style="left:287px;width:80px">0.000250</div>
<div class="td" style="left:367px;width:80px">0.006863</div>
<div class="td" style="left:447px;width:80px">0.036477</div>
<div class="td" style="left:527px;width:80px">Uniform + X</div>
</div>
<div class="tr" style="top:660px">
<div class="td" style="left:0px;width:103px">beam B10</div>
<div class="td" style="left:103px;width:54px">4</div>
<div class="td" style="left:157px;width:60px">End</div>
<div class="td" style="left:217px;width:70px">(3)</div>
<div class="td" style="left:287px;width:80px">0.000034</div>
<div class="td" style="left:367px;width:80px">0.007235</div>
<div class="td" style="left:447px;width:80px">0.004653</div>
<div class="td" style="left:527px;width:80px">Uniform + X</div>
</div>
<div class="a" style="left:607px;top:0;width:9px;height:682px;background:#fff"></div>
<div class="a" style="left:616px;top:0;width:16px;height:682px;background:#f0f0f0"></div>
<svg class="a" style="left:619px;top:5px" width="10" height="7"><path d="M1 6L5 2L9 6" stroke="#606060" stroke-width="1.6" fill="none"/></svg>
<div class="a" style="left:617px;top:17px;width:14px;height:17px;background:#cdcdcd"></div>
<svg class="a" style="left:619px;top:670px" width="10" height="7"><path d="M1 1L5 5L9 1" stroke="#606060" stroke-width="1.6" fill="none"/></svg>
</div>

<!-- splitter 2 -->
<div class="a spl" style="left:1169px;top:156px;width:13px;height:701px"></div>
<div class="a" style="left:1174px;top:489px;width:3px;height:36px;background:repeating-linear-gradient(180deg,#111 0 2px,#fff 2px 3px,transparent 3px 4px)"></div>

<!-- 3D view -->
<div class="a" style="left:1183px;top:171px;width:410px;height:686px;background:#f0f0f0;border-top:1px solid #d7d7d7;border-left:1px solid #d7d7d7"></div>
<svg class="a" style="left:1184px;top:186px" width="407" height="670" viewBox="1184 186 407 670">
<rect x="1184" y="186" width="407" height="670" fill="#fff"/>
<path d="M1534.9 856.0L1591.0 820.9M1419.2 856.0L1591.0 760.4M1303.3 856.0L1591.0 711.8M1198.5 856.0L1184.0 762.9M1187.3 856.0L1591.0 672.0M1257.7 856.0L1184.0 569.3M1184.0 808.9L1591.0 638.8M1316.8 856.0L1184.0 484.7M1184.0 767.6L1591.0 610.6M1375.8 856.0L1184.0 437.3M1184.0 732.3L1591.0 586.5M1434.9 856.0L1184.0 407.0M1184.0 701.6L1591.0 565.5M1493.9 856.0L1184.0 385.9M1184.0 674.7L1591.0 547.1M1552.9 856.0L1186.6 373.9M1184.0 651.0L1591.0 530.9M1591.0 831.8L1196.5 373.1M1184.0 629.9L1591.0 516.5M1591.0 773.0L1206.3 372.3M1184.0 611.0L1591.0 503.6M1591.0 725.3L1215.9 371.6M1184.0 594.0L1591.0 491.9M1591.0 685.9L1225.3 370.8M1184.0 578.5L1591.0 481.4M1591.0 652.7L1234.6 370.1M1184.0 564.5L1591.0 471.8M1591.0 624.5L1243.8 369.3M1184.0 551.7L1591.0 463.1M1591.0 600.1L1252.8 368.6M1184.0 540.0L1591.0 455.1M1591.0 578.8L1261.7 367.9M1184.0 529.2L1591.0 447.7M1591.0 560.2L1270.4 367.2M1184.0 519.2L1591.0 440.9M1591.0 543.6L1279.1 366.5M1184.0 510.0L1591.0 434.6M1591.0 528.9L1287.6 365.8M1184.0 501.4L1591.0 428.7M1591.0 515.6L1296.0 365.2M1184.0 493.4L1591.0 423.3M1591.0 503.7L1304.3 364.5M1184.0 486.0L1591.0 418.2M1591.0 492.8L1312.4 363.9M1184.0 479.0L1591.0 413.4M1591.0 482.9L1320.5 363.2M1184.0 472.4L1591.0 408.9M1591.0 473.9L1328.4 362.6M1184.0 466.3L1591.0 404.7M1591.0 465.6L1336.2 362.0M1184.0 460.5L1591.0 400.8M1591.0 457.9L1343.9 361.4M1184.0 455.0L1591.0 397.0M1591.0 450.8L1351.6 360.8M1184.0 449.9L1591.0 393.5M1591.0 444.3L1359.1 360.2M1184.0 445.0L1591.0 390.2M1591.0 438.1L1366.5 359.6M1184.0 440.4L1591.0 387.0M1591.0 432.4L1373.8 359.0M1184.0 436.0L1591.0 384.0M1591.0 427.1L1381.0 358.4M1184.0 431.8L1591.0 381.2M1591.0 422.1L1388.1 357.9M1184.0 427.9L1591.0 378.5M1591.0 417.5L1395.2 357.3M1184.0 424.1L1591.0 375.9M1591.0 413.1L1402.1 356.7M1184.0 420.5L1591.0 373.4M1591.0 408.9L1409.0 356.2M1184.0 417.0L1591.0 371.1M1591.0 405.0L1415.7 355.7M1184.0 413.7L1591.0 368.8M1591.0 401.3L1422.4 355.1M1184.0 410.6L1591.0 366.7M1591.0 397.8L1429.0 354.6M1184.0 407.6L1591.0 364.6M1591.0 394.5L1435.5 354.1M1184.0 404.7L1591.0 362.6M1591.0 391.3L1441.9 353.6M1184.0 401.9L1589.2 360.9M1591.0 388.3L1448.3 353.1M1184.0 399.3L1583.0 359.7M1591.0 385.5L1454.6 352.6M1184.0 396.7L1576.9 358.6M1591.0 382.8L1460.8 352.1M1184.0 394.3L1570.9 357.4M1591.0 380.2L1466.9 351.6M1184.0 391.9L1565.1 356.3M1591.0 377.7L1472.9 351.1M1184.0 389.6L1559.5 355.2M1591.0 375.3L1478.9 350.6M1184.0 387.5L1553.9 354.2M1591.0 373.1L1484.8 350.2M1184.0 385.3L1548.6 353.2M1591.0 370.9L1490.6 349.7M1184.0 383.3L1543.3 352.2M1591.0 368.8L1496.4 349.2M1591.0 366.8L1502.1 348.8M1591.0 364.9L1507.7 348.3M1591.0 363.0L1513.3 347.9M1591.0 361.3L1518.8 347.5" stroke="#6a6a6a" stroke-width="1" fill="none" shape-rendering="crispEdges"/>
<defs><linearGradient id="colg" x1="0" x2="1" y1="0" y2="0"><stop offset="0" stop-color="#858585"/><stop offset="0.4" stop-color="#a2a2a2"/><stop offset="0.8" stop-color="#969696"/><stop offset="1" stop-color="#7c7c7c"/></linearGradient></defs><polygon points="1288.9,765.4 1325.0,750.3 1313.8,725.6 1279.2,739.2" fill="#d2d2d4" stroke="#8c8c8c" stroke-width="1" />
<polygon points="1384.3,726.7 1414.9,713.8 1400.2,692.6 1370.7,704.3" fill="#d2d2d4" stroke="#8c8c8c" stroke-width="1" />
<polygon points="1490.5,683.5 1515.6,672.9 1497.9,655.4 1473.4,665.0" fill="#d2d2d4" stroke="#8c8c8c" stroke-width="1" />
<polygon points="1256.0,680.2 1286.9,669.8 1279.1,652.5 1249.4,662.0" fill="#d2d2d4" stroke="#8c8c8c" stroke-width="1" />
<polygon points="1231.6,633.3 1259.7,625.1 1253.8,611.4 1226.7,618.9" fill="#d2d2d4" stroke="#8c8c8c" stroke-width="1" />
<polygon points="1216.2,442.4 1295.8,426.3 1294.2,390.2 1262.8,369.8 1262.8,366.7 1393.0,351.0 1446.0,352.6 1530.7,376.9 1538.0,392.0 1389.4,411.4 1389.0,502.4 1285.7,525.0 1267.7,523.4" fill="#6c6f6f" />
<polygon points="1402.0,425.5 1427.0,421.6 1444.3,436.0 1455.3,437.3 1510.3,465.6 1512.2,477.2 1401.2,499.3" fill="#6c6f6f" />
<polygon points="1248.3,540.2 1286.7,536.1 1401.2,510.4 1456.7,500.4 1503.1,530.6 1504.1,544.7 1294.8,602.7 1276.6,600.7" fill="#6c6f6f" />
<polygon points="1256.4,598.7 1295.8,614.9 1400.2,583.1 1466.8,566.0 1497.0,585.1 1497.0,601.2 1301.8,670.4 1286.7,673.4" fill="#6c6f6f" />
<polygon points="1216.2,442.4 1267.7,523.4 1268.6,529.0 1217.0,451.0" fill="#7b7d7d" />
<polygon points="1247.5,538.5 1276.6,600.7 1277.5,607.0 1248.0,546.0" fill="#7b7d7d" />
<polygon points="1255.5,597.0 1286.7,673.4 1287.5,680.0 1256.0,605.0" fill="#7b7d7d" />
<polygon points="1262.8,366.7 1389.4,411.4 1389.4,415.0 1262.8,371.0" fill="#5d6060" />
<path d="M1297.3 363.5L1387.6 409M1330 381.6L1400 375.3M1295.8 426.3L1360 458M1262 369L1400 351.5M1400 500L1470 490" stroke="#5f6262" stroke-width="0.8" fill="none" opacity="0.6"/>
<polygon points="1294.2,390.2 1327.9,410.6 1327.9,421.6 1295.8,426.3" fill="#a6a6a6" />
<polygon points="1328.7,413.8 1340.5,413.8 1340.5,456.2 1328.7,456.2" fill="#a0a0a0" />
<polygon points="1444.3,418.5 1455.3,418.5 1455.3,437.3 1444.3,437.3" fill="#8e8e8e" />
<polygon points="1217.0,444.0 1224.5,444.0 1254.4,620.0 1244.3,620.0" fill="url(#colg)" />
<polygon points="1235.5,478.0 1244.5,478.0 1271.6,667.3 1263.5,667.3" fill="url(#colg)" />
<polygon points="1225.0,499.0 1251.0,537.0 1252.0,546.0 1226.0,508.0" fill="#6f7171" />
<polygon points="1225.0,499.0 1251.0,537.0 1251.5,539.5 1225.5,501.5" fill="#9a9a9a" />
<polygon points="1234.0,552.0 1259.0,596.0 1260.0,605.0 1235.0,561.0" fill="#6f7171" />
<polygon points="1234.0,552.0 1259.0,596.0 1259.5,598.5 1234.5,554.5" fill="#9a9a9a" />
<polygon points="1389.4,411.4 1522.8,394.1 1516.5,409.0 1402.0,425.5 1389.4,426.0" fill="#929292" />
<polygon points="1285.7,525.0 1513.0,477.2 1512.2,488.2 1286.7,536.1" fill="#929292" />
<polygon points="1294.8,602.7 1504.1,544.7 1503.1,556.9 1295.8,614.9" fill="#929292" />
<polygon points="1301.8,670.4 1497.0,601.2 1497.0,612.0 1302.8,681.5" fill="#929292" />
<polygon points="1271.6,526.0 1285.7,526.0 1308.0,748.0 1295.5,748.0" fill="url(#colg)" />
<polygon points="1389.0,411.0 1401.0,411.0 1399.5,711.0 1387.5,711.0" fill="url(#colg)" />
<polygon points="1522.0,392.6 1537.7,392.6 1511.2,601.0 1497.0,601.0" fill="url(#colg)" />
<polygon points="1497.0,601.0 1511.2,601.0 1504.0,663.0 1486.0,668.0" fill="#a00000" />
<path d="M1239.3 786.1L1281 769" stroke="#ff0000" stroke-width="1.3"/>
<polygon points="1279.4,765.3 1295.8,762.6 1281.7,772.8" fill="#ff0000" />
<path d="M1239.3 786.1L1232 758" stroke="#0000ff" stroke-width="1.3"/>
<path d="M1228.7 741L1229 756" stroke="#008000" stroke-width="1.5"/>
<polygon points="1230.0,749.0 1237.0,746.0 1238.0,760.0 1232.0,761.5" fill="#0000ff" />
<text x="1301.5" y="771" font-size="10" fill="#ff0000" font-family="Liberation Sans">X</text>
<text x="1229.5" y="747" font-size="7" fill="#008000" font-family="Liberation Sans">Y</text>
<text x="1233" y="753" font-size="7" fill="#0000ff" font-family="Liberation Sans">Z</text>
</svg>
<!-- right icon panel -->
<div class="a" style="left:1593px;top:171px;width:79px;height:686px;background:#f0f0f0;border:1px solid #8c9cb1;border-radius:3px"></div>
<svg class="a" style="left:1617px;top:199px" width="32" height="32" viewBox="0 0 32 32">
 <path d="M2 18L7 0L12 18Z" fill="#f04a20"/><path d="M7 0L12 18L8 18Z" fill="#c02a10"/>
 <path d="M5 16Q6 25 14 25L14 22L20 27L14 32L14 29Q4 28 4 18Z" fill="#30b030"/>
 <path d="M15 16L24 12L32 15L31 27L22 32L15 28Z" fill="#3a7ae0" stroke="#1a4ab0" stroke-width="0.8"/>
 <path d="M15 16L24 12L32 15L23 19Z" fill="#8ac0ff"/><path d="M23 19L22 32" stroke="#1a4ab0" stroke-width="0.8"/>
</svg>
<svg class="a" style="left:1620px;top:256px" width="26" height="31" viewBox="0 0 26 31">
 <rect x="1" y="1" width="24" height="29" rx="3" fill="#3a8ee8"/>
 <rect x="4" y="3" width="18" height="25" fill="#eef0f4"/>
 <rect x="7" y="7" width="7" height="6" fill="#fff" stroke="#888" stroke-width="0.8"/>
 <rect x="7" y="17" width="7" height="6" fill="#fff" stroke="#888" stroke-width="0.8"/>
 <path d="M8 9L11 12L18 4M8 19L11 22L18 14" stroke="#d02020" stroke-width="2" fill="none"/>
</svg>
<svg class="a" style="left:1617px;top:311px" width="32" height="32" viewBox="0 0 31 30">
 <rect x="2" y="9" width="27" height="11" fill="url(#gold2)"/>
 <defs><linearGradient id="gold2" x1="0" y1="0" x2="0" y2="1"><stop offset="0" stop-color="#fff28a"/><stop offset="0.5" stop-color="#e8c21a"/><stop offset="1" stop-color="#a47a00"/></linearGradient></defs>
 <path d="M0 3H31M0 27H31M3 0V30M28 0V30" stroke="#1a4fb8" stroke-width="1.6"/>
</svg>



<!-- status bar -->
<div class="a" style="left:0;top:869px;width:1684px;height:22px;background:#f0f0f0"></div>
<div class="a" style="left:0;top:891px;width:1686px;height:1px;background:#6f7e8a"></div>
<div class="sbsep" style="left:1208px"></div>
<div class="sbsep" style="left:1293px"></div>
<div class="sbsep" style="left:1363px"></div>
<div class="sbsep" style="left:1453px"></div>
<div class="sbsep" style="left:1533px"></div>
<div class="t sb" style="left:1213px">Length: m</div>
<div class="t sb" style="left:1298px">Force: kN</div>
<div class="t sb" style="left:1368px">Mass: tonne</div>
<div class="t sb" style="left:1458px">Stress: kPa</div>
<div class="t sb" style="left:1538px">Acceleration: m/sec2</div>
<svg class="a" style="left:1673px;top:880px" width="10" height="10"><g fill="#a8a8a8"><rect x="6" y="0" width="2" height="2"/><rect x="3" y="3" width="2" height="2"/><rect x="6" y="3" width="2" height="2"/><rect x="0" y="6" width="2" height="2"/><rect x="3" y="6" width="2" height="2"/><rect x="6" y="6" width="2" height="2"/></g></svg>
</body></html>
